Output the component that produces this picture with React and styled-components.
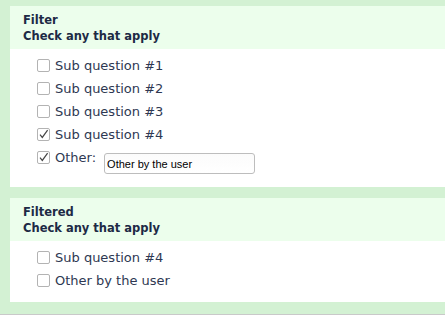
import React from "react";
import styled, { createGlobalStyle } from "styled-components";

const GlobalStyle = createGlobalStyle`
  body {
    margin: 0;
    background: #fff;
    font-family: "DejaVu Sans", Verdana, sans-serif;
  }
`;

const Page = styled.div`
  display: flex;
  flex-direction: column;
  gap: 11px;
  padding: 6px 0 12px 10px;
  background: #d3f1d3;
  border-bottom: 1px solid #c9c9c9;
  margin-bottom: 1px;
`;

const Panel = styled.section`
  background: #fff;
`;

const Header = styled.div`
  background: #ecfeec;
  padding: 6px 13px 5px;
  color: #1d2a45;
  font-weight: bold;
  font-size: 11.5px;
  line-height: 16px;
`;

const List = styled.div`
  display: flex;
  flex-direction: column;
  padding: 5px 0 ${(p) => p.$bottom}px 27px;
`;

const Row = styled.label`
  display: flex;
  align-items: ${(p) => (p.$top ? "flex-start" : "center")};
  min-height: 23px;
  padding-top: ${(p) => (p.$top ? 5 : 0)}px;
  box-sizing: border-box;
  color: #2e3852;
  font-size: 13px;
  line-height: 13px;
`;

const Box = styled.span`
  width: 11px;
  height: 11px;
  border: 1px solid #b3b3b3;
  border-radius: 2px;
  background: #fff;
  display: flex;
  align-items: center;
  justify-content: center;
  margin-right: 5px;
  flex: none;
`;

const Text = styled.span`
  white-space: nowrap;
`;

const TextInput = styled.input`
  margin: 2px 0 0 8px;
  width: 151px;
  height: 21px;
  box-sizing: border-box;
  border: 1px solid #bdbdbd;
  border-radius: 3px;
  padding: 0 2px;
  font-family: "Liberation Sans", Arial, sans-serif;
  font-size: 11px;
  color: #000;
  background: linear-gradient(#fbfbfb, #fff);
  outline: none;
`;

function Check({ checked }) {
  return (
    <Box>
      {checked && (
        <svg width="11" height="11" viewBox="0 0 11 11">
          <path
            d="M2 5.6 L4.3 8.4 L9.6 1.2"
            fill="none"
            stroke="#444"
            strokeWidth="1.2"
          />
        </svg>
      )}
    </Box>
  );
}

const filterItems = [
  { label: "Sub question #1", checked: false },
  { label: "Sub question #2", checked: false },
  { label: "Sub question #3", checked: false },
  { label: "Sub question #4", checked: true },
];

const filteredItems = ["Sub question #4", "Other by the user"];

export default function App() {
  return (
    <>
      <GlobalStyle />
      <Page>
        <Panel>
          <Header>
            Filter
            <br />
            Check any that apply
          </Header>
          <List $bottom={13}>
            {filterItems.map((it) => (
              <Row key={it.label}>
                <Check checked={it.checked} />
                <Text>{it.label}</Text>
              </Row>
            ))}
            <Row $top>
              <Check checked />
              <Text>Other:</Text>
              <TextInput defaultValue="Other by the user" />
            </Row>
          </List>
        </Panel>
        <Panel>
          <Header>
            Filtered
            <br />
            Check any that apply
          </Header>
          <List $bottom={10}>
            {filteredItems.map((label) => (
              <Row key={label}>
                <Check />
                <Text>{label}</Text>
              </Row>
            ))}
          </List>
        </Panel>
      </Page>
    </>
  );
}
